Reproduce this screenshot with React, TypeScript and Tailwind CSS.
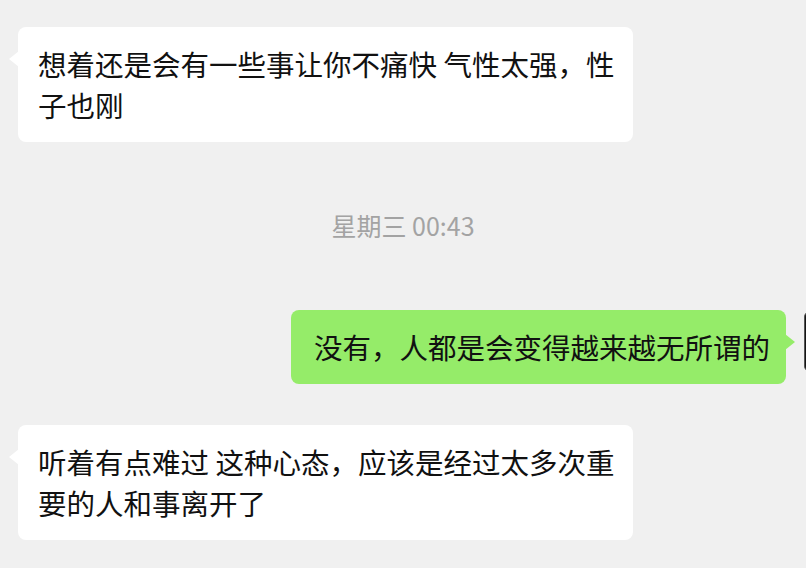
import React from 'react';

const font = {
  fontFamily: '"PingFang SC", "Noto Sans CJK SC", "Noto Sans", sans-serif',
};

const LeftBubble = ({ lines }: { lines: string[] }) => (
  <div className="relative ml-[18px] w-[615px] rounded-[8px] bg-white pl-5 pr-3 pt-[16px] pb-[17px]">
    <span className="absolute left-[-9px] top-[24px] h-0 w-0 border-y-[8px] border-r-[10px] border-y-transparent border-r-white" />
    {lines.map((l, i) => (
      <div key={i} className="whitespace-nowrap text-[28.5px] leading-[41px] text-[#111]">
        {l}
      </div>
    ))}
  </div>
);

export default function App() {
  return (
    <div
      className="flex h-[568px] w-[806px] flex-col overflow-hidden bg-[#f0f0f0]"
      style={font}
    >
      <div className="mt-[27px]">
        <LeftBubble lines={['想着还是会有一些事让你不痛快 气性太强，性', '子也刚']} />
      </div>

      <div className="mt-[68px] text-center text-[25px] leading-[30px] text-[#a3a3a3]">
        星期三 00:43
      </div>

      <div className="mt-[70px] flex items-start justify-end">
        <div className="relative rounded-[8px] bg-[#95ec69] pl-[23px] pr-[16px] pt-[16px] pb-[17px]">
          <div className="whitespace-nowrap text-[28.5px] leading-[41px] text-[#111]">
            没有，人都是会变得越来越无所谓的
          </div>
          <span className="absolute right-[-9px] top-[24px] h-0 w-0 border-y-[8px] border-l-[10px] border-y-transparent border-l-[#95ec69]" />
        </div>
        <div className="ml-[18px] mr-[-60px] mt-[1px] h-[61px] w-[62px] shrink-0 rounded-[6px] border border-[#555] bg-[#141414]" />
      </div>

      <div className="mt-[41px]">
        <LeftBubble lines={['听着有点难过 这种心态，应该是经过太多次重', '要的人和事离开了']} />
      </div>
    </div>
  );
}
